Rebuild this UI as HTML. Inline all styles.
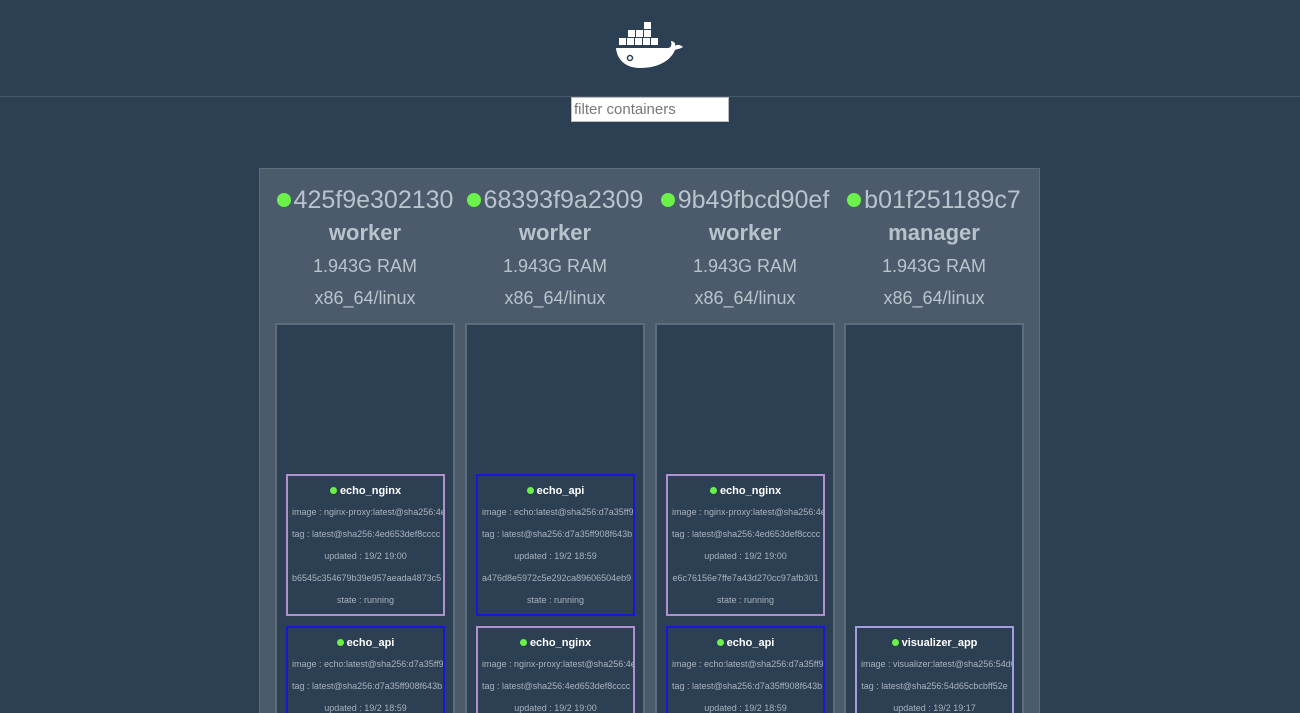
<!DOCTYPE html>
<html style="width:1300px;height:713px;overflow:hidden"><head><style>
*{margin:0;padding:0;box-sizing:border-box}
body{width:1300px;height:713px;overflow:hidden;background:#2d3f53;font-family:"Liberation Sans",sans-serif;position:relative}
.hr{position:absolute;left:0;top:96px;width:1300px;height:1px;background:#46586a}
.inp{position:absolute;left:571px;top:97px;width:158px;height:25px;background:#fff;border:1px solid #bbb;font-size:15px;color:#777;padding:3px 0 0 2px}
.panel{position:absolute;left:259px;top:168px;width:781px;height:545px;background:#4b5b6b;border:1px solid #5d6d7c;border-bottom:none;overflow:hidden}
.node{position:absolute;top:0;width:210px;height:545px;overflow:hidden;text-align:center;color:#b9c3cc}
.id{position:absolute;top:17px;left:0;width:210px;font-size:25px;white-space:nowrap}
.dot{display:inline-block;width:14px;height:14px;border-radius:50%;background:#6cf04a;margin-right:3px;vertical-align:1px}
.role{position:absolute;top:51px;width:210px;font-size:22px;font-weight:bold}
.ram{position:absolute;top:87px;width:210px;font-size:18px}
.arch{position:absolute;top:119px;width:210px;font-size:18px}
.col{position:absolute;top:154px;left:15px;width:180px;height:400px;overflow:hidden;background:#2d3f53;border:2px solid #5d6d7c}
.card{position:absolute;left:9px;width:159px;height:142px;border:2px solid #b290cf;overflow:hidden}
.card.b{border-color:#1717d8}
.card.v{border-color:#a49ee0}
.t{color:#fff;font-weight:bold;font-size:11px;text-align:center;margin-top:9px;height:22px;white-space:nowrap}
.t .dot{width:7px;height:7px;margin-right:3px;vertical-align:0}
.l{color:#aab3bd;font-size:9px;height:22px;white-space:nowrap;text-align:center;padding:0 4px}
</style></head><body>
<svg style="position:absolute;left:614px;top:20px" width="72" height="50" viewBox="0 0 72 50">
<g fill="#fff">
<rect x="30" y="2" width="7" height="7"/>
<rect x="14" y="10" width="7" height="7"/><rect x="22" y="10" width="7" height="7"/><rect x="30" y="10" width="7" height="7"/>
<rect x="5" y="18" width="7" height="7"/><rect x="13" y="18" width="7" height="7"/><rect x="21" y="18" width="7" height="7"/><rect x="29" y="18" width="7" height="7"/><rect x="37" y="18" width="7" height="7"/>
<path d="M2 28 H54 C57 28 58 25 57 21 C60 21 62 24 61 26 C63 24 67 25 69 27 C66 29 63 29 61 30 C57 40 45 48 26 48 C12 48 3 40 2 28Z"/>
</g>
<circle cx="16" cy="38" r="2.5" fill="none" stroke="#2d3f53" stroke-width="1.5"/>
</svg>
<div class="hr"></div>
<div class="inp">filter containers</div>
<div class="panel">
<div class="node" style="left:0">
<div class="id"><span class="dot"></span>425f9e302130</div><div class="role">worker</div><div class="ram">1.943G RAM</div><div class="arch">x86_64/linux</div>
<div class="col">
<div class="card" style="top:149px"><div class="t"><span class="dot"></span>echo_nginx</div><div class="l">image : nginx-proxy:latest@sha256:4ed6</div><div class="l">tag : latest@sha256:4ed653def8cccc</div><div class="l">updated : 19/2 19:00</div><div class="l">b6545c354679b39e957aeada4873c5</div><div class="l">state : running</div></div>
<div class="card b" style="top:301px"><div class="t"><span class="dot"></span>echo_api</div><div class="l">image : echo:latest@sha256:d7a35ff9</div><div class="l">tag : latest@sha256:d7a35ff908f643b</div><div class="l">updated : 19/2 18:59</div></div>
</div></div>
<div class="node" style="left:190px">
<div class="id"><span class="dot"></span>68393f9a2309</div><div class="role">worker</div><div class="ram">1.943G RAM</div><div class="arch">x86_64/linux</div>
<div class="col">
<div class="card b" style="top:149px"><div class="t"><span class="dot"></span>echo_api</div><div class="l">image : echo:latest@sha256:d7a35ff9</div><div class="l">tag : latest@sha256:d7a35ff908f643b</div><div class="l">updated : 19/2 18:59</div><div class="l">a476d8e5972c5e292ca89606504eb9</div><div class="l">state : running</div></div>
<div class="card" style="top:301px"><div class="t"><span class="dot"></span>echo_nginx</div><div class="l">image : nginx-proxy:latest@sha256:4ed6</div><div class="l">tag : latest@sha256:4ed653def8cccc</div><div class="l">updated : 19/2 19:00</div></div>
</div></div>
<div class="node" style="left:380px">
<div class="id"><span class="dot"></span>9b49fbcd90ef</div><div class="role">worker</div><div class="ram">1.943G RAM</div><div class="arch">x86_64/linux</div>
<div class="col">
<div class="card" style="top:149px"><div class="t"><span class="dot"></span>echo_nginx</div><div class="l">image : nginx-proxy:latest@sha256:4ed6</div><div class="l">tag : latest@sha256:4ed653def8cccc</div><div class="l">updated : 19/2 19:00</div><div class="l">e6c76156e7ffe7a43d270cc97afb301</div><div class="l">state : running</div></div>
<div class="card b" style="top:301px"><div class="t"><span class="dot"></span>echo_api</div><div class="l">image : echo:latest@sha256:d7a35ff9</div><div class="l">tag : latest@sha256:d7a35ff908f643b</div><div class="l">updated : 19/2 18:59</div></div>
</div></div>
<div class="node" style="left:569px">
<div class="id"><span class="dot"></span>b01f251189c7</div><div class="role">manager</div><div class="ram">1.943G RAM</div><div class="arch">x86_64/linux</div>
<div class="col">
<div class="card v" style="top:301px"><div class="t"><span class="dot"></span>visualizer_app</div><div class="l">image : visualizer:latest@sha256:54d6</div><div class="l">tag : latest@sha256:54d65cbcbff52e</div><div class="l">updated : 19/2 19:17</div></div>
</div></div>
</div>
</body></html>
